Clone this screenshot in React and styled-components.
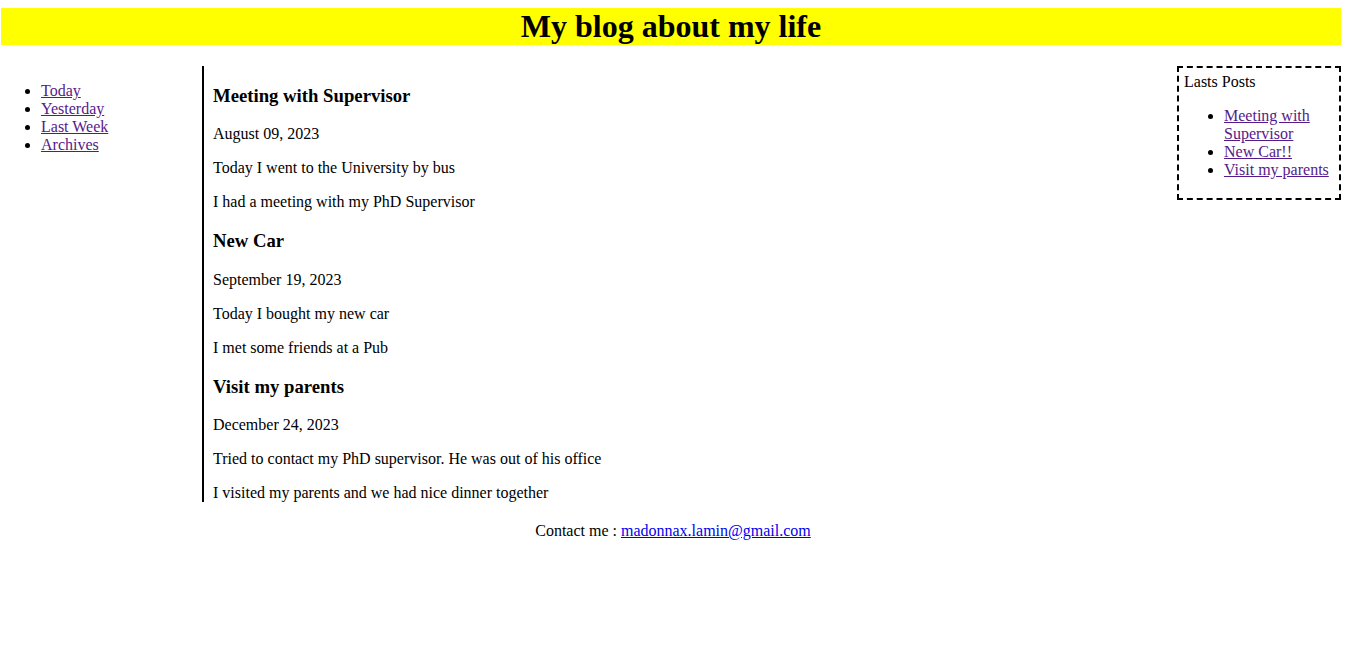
import React from "react"
import styled, { createGlobalStyle } from "styled-components"

const GlobalStyle = createGlobalStyle`
  body {
    margin: 8px 8px 8px 1px;
    font-family: "Liberation Serif", "Times New Roman", serif;
    font-size: 16px;
    color: #000;
    background: #fff;
  }
`

const posts = [
  {
    title: "Meeting with Supervisor",
    date: "August 09, 2023",
    lines: ["Today I went to the University by bus", "I had a meeting with my PhD Supervisor"],
  },
  {
    title: "New Car",
    date: "September 19, 2023",
    lines: ["Today I bought my new car", "I met some friends at a Pub"],
  },
  {
    title: "Visit my parents",
    date: "December 24, 2023",
    lines: ["Tried to contact my PhD supervisor. He was out of his office", "I visited my parents and we had nice dinner together"],
  },
]

const App = () => {
  return (
    <>
      <GlobalStyle />
      <Header>My blog about my life</Header>
      <Layout>
        <Nav>
          <LinkList>
            <li><PageLink href="#today">Today</PageLink></li>
            <li><PageLink href="#yesterday">Yesterday</PageLink></li>
            <li><PageLink href="#week">Last Week</PageLink></li>
            <li><PageLink href="#archives">Archives</PageLink></li>
          </LinkList>
        </Nav>
        <Main>
          {posts.map((post) => (
            <Article key={post.title}>
              <h3>{post.title}</h3>
              <p>{post.date}</p>
              {post.lines.map((line) => (
                <p key={line}>{line}</p>
              ))}
            </Article>
          ))}
        </Main>
        <Aside>
          <AsideTitle>Lasts Posts</AsideTitle>
          <LinkList>
            <li><PageLink href="#p1">Meeting with Supervisor</PageLink></li>
            <li><PageLink href="#p2">New Car!!</PageLink></li>
            <li><PageLink href="#p3">Visit my parents</PageLink></li>
          </LinkList>
        </Aside>
      </Layout>
      <Footer>
        Contact me : <MailLink href="#mail">madonnax.lamin@gmail.com</MailLink>
      </Footer>
    </>
  )
}

export default App

const Header = styled.h1`
  margin: 0 0 21px;
  background: #ffff00;
  text-align: center;
  font-size: 32px;
  font-weight: bold;
`

const Layout = styled.div`
  display: grid;
  grid-template-columns: 201px 1fr 164px;
  align-items: start;
`

const Nav = styled.nav``

const LinkList = styled.ul`
  margin: 16px 0;
  padding-left: 40px;
  list-style: disc;
`

const PageLink = styled.a`
  color: #551a8b;
  text-decoration: underline;
`

const Main = styled.main`
  border-left: 2px solid #000;
  padding-left: 9px;

  p {
    margin: 16px 0;
  }

  article:last-child p:last-child {
    margin-bottom: 0;
  }
`

const Article = styled.article`
  h3 {
    font-size: 1.17em;
    font-weight: bold;
    margin: 18.72px 0;
    line-height: 22px;
  }
`

const Aside = styled.aside`
  border: 2px dashed #000;
  padding: 5px 5px 3px;
`

const AsideTitle = styled.div``

const Footer = styled.p`
  margin: 20px 0 16px;
  padding-left: 4px;
  text-align: center;
`

const MailLink = styled.a`
  color: #0000ee;
  text-decoration: underline;
`
